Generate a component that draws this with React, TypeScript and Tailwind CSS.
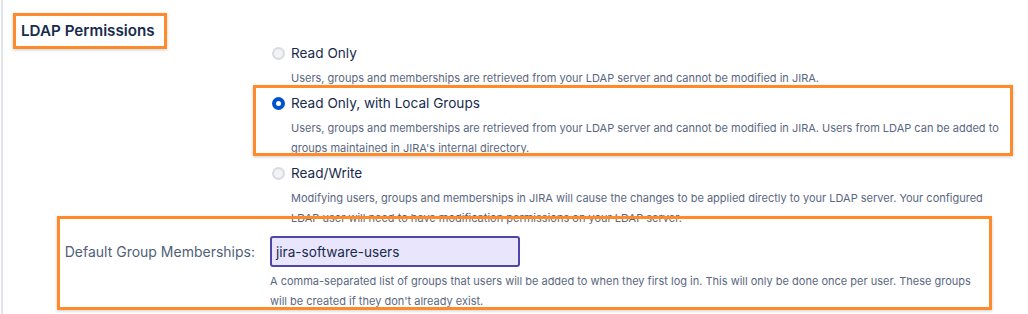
import React from 'react';

// Permission options, description lines kept as they wrap in the picture
const options = [
  {
    label: 'Read Only',
    checked: false,
    lines: ['Users, groups and memberships are retrieved from your LDAP server and cannot be modified in JIRA.'],
  },
  {
    label: 'Read Only, with Local Groups',
    checked: true,
    lines: [
      'Users, groups and memberships are retrieved from your LDAP server and cannot be modified in JIRA. Users from LDAP can be added to',
      "groups maintained in JIRA's internal directory.",
    ],
  },
  {
    label: 'Read/Write',
    checked: false,
    lines: [
      'Modifying users, groups and memberships in JIRA will cause the changes to be applied directly to your LDAP server. Your configured',
      'LDAP user will need to have modification permissions on your LDAP server.',
    ],
  },
];

const Radio = ({ checked }: { checked: boolean }) =>
  checked ? (
    <span className="ml-[2px] flex h-[13px] w-[13px] shrink-0 items-center justify-center rounded-full bg-[#0052cc]">
      <span className="h-[5px] w-[5px] rounded-full bg-white" />
    </span>
  ) : (
    <span className="ml-[2px] h-[13px] w-[13px] shrink-0 rounded-full border-2 border-[#d8dce2] bg-[#f2f3f5]" />
  );

const Highlight = ({ className }: { className: string }) => (
  <div
    className={`pointer-events-none absolute border-[3px] border-[#ff8a2a] shadow-[0_1px_3px_rgba(0,0,0,0.2)] ${className}`}
  />
);

export default function App() {
  return (
    <div
      className="relative h-[314px] w-[1028px] overflow-hidden bg-white"
      style={{ fontFamily: 'Inter, "Noto Sans", sans-serif' }}
    >
      <div className="absolute left-[1px] top-0 h-full w-[2px] bg-[#e1e4e9]" />

      {/* Section title */}
      <div className="h-[43px] pl-[13px] pt-[13px]">
        <div className="flex h-[36px] w-[154px] items-center border-[3px] border-[#ff8a2a] pl-[5px] shadow-[0_1px_3px_rgba(0,0,0,0.2)]">
          <h2 className="text-[15.2px] font-semibold leading-5 text-[#172b4d]">LDAP Permissions</h2>
        </div>
      </div>

      {/* Radio options */}
      <div className="flex flex-col gap-[5px] pl-[270px]">
        {options.map((opt) => (
          <div key={opt.label} className="relative flex flex-col gap-[5px]">
            {opt.checked && <Highlight className="-left-[17px] -top-[8px] h-[71px] w-[760px]" />}
            <div className="flex h-5 items-center gap-[6px]">
              <Radio checked={opt.checked} />
              <span className="text-[13.6px] leading-5 text-[#172b4d]">{opt.label}</span>
            </div>
            <div className="pl-[21px] text-[11px] leading-5 text-[#5a6781]">
              {opt.lines.map((line) => (
                <div key={line} className="whitespace-nowrap">
                  {line}
                </div>
              ))}
            </div>
          </div>
        ))}
      </div>

      {/* Default group memberships */}
      <div className="relative mt-[8px] flex">
        <Highlight className="-top-[20px] left-[57px] h-[94px] w-[935px]" />
        <div className="flex h-[31px] w-[256px] shrink-0 items-center justify-end pr-px">
          <label className="text-[14px] leading-5 text-[#505f79]">Default Group Memberships:</label>
        </div>
        <div className="ml-[14px] flex flex-col">
          <div className="flex h-[31px] w-[250px] items-center rounded-[3px] border-2 border-[#5046a8] bg-[#e8e5fc] pl-[4px]">
            <span className="text-[13.6px] leading-5 text-[#172b4d]">jira-software-users</span>
          </div>
          <div className="mt-[4px] text-[11px] leading-5 text-[#5a6781]">
            <div className="whitespace-nowrap">
              A comma-separated list of groups that users will be added to when they first log in. This will only be done once per user. These groups
            </div>
            <div className="whitespace-nowrap">will be created if they don't already exist.</div>
          </div>
        </div>
      </div>
    </div>
  );
}
